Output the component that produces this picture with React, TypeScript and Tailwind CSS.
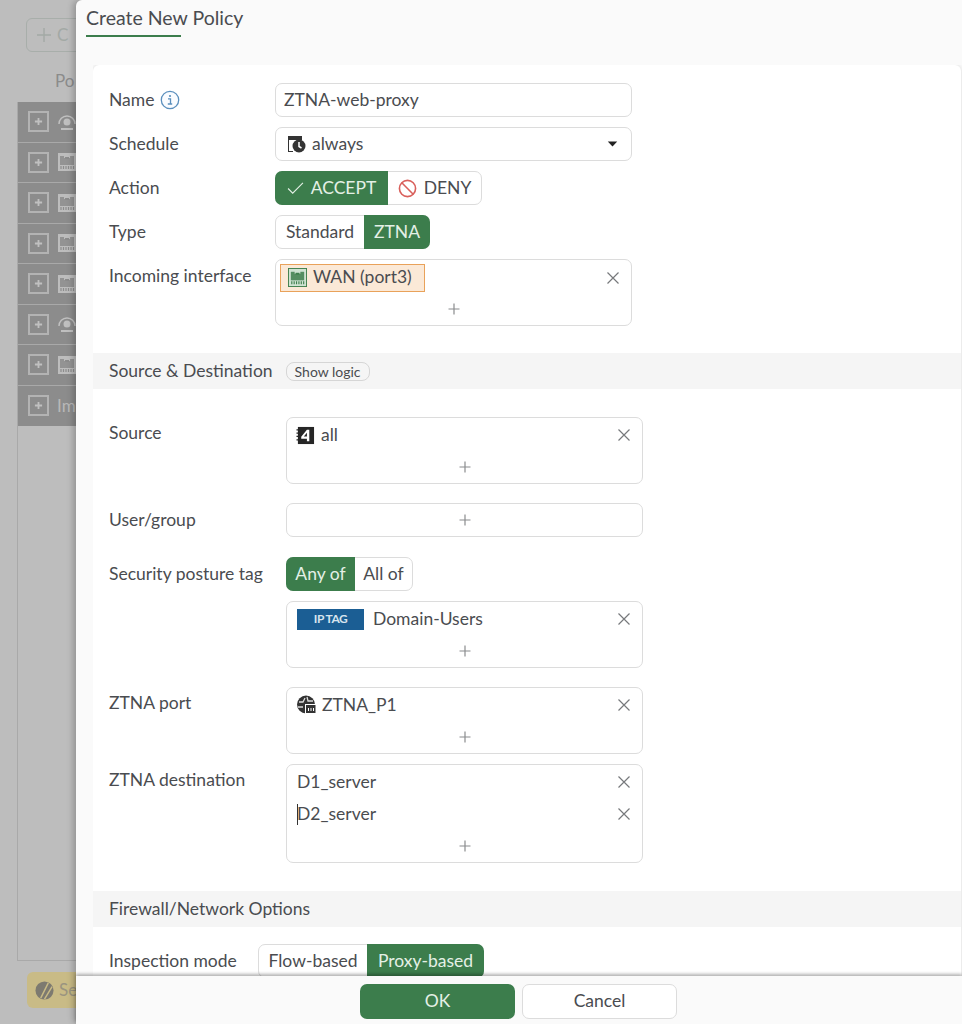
import type { ReactNode } from "react"

function PortIcon({ className, fg = "#3f7f4d", bg = "#cfe3d2" }: { className?: string; fg?: string; bg?: string }) {
  return (
    <svg viewBox="0 0 20 20" className={className}>
      <rect x="0.5" y="0.5" width="19" height="19" fill={bg} stroke={fg} />
      <path d="M3 4h14v9H3z" fill={fg} opacity="0.85" />
      <path d="M7 3h6v3H7z" fill={bg} />
      <path d="M8 5h4v2H8z" fill={fg} />
      <path d="M4 14v3M6.500 14v3M9 14v3M11.500 14v3M14 14v3M16.500 14v3" stroke={fg} strokeWidth="1.200" />
    </svg>
  )
}

function Times() {
  return (
    <svg viewBox="0 0 14 14" className="w-[14px] h-[14px] shrink-0">
      <path d="M1.500 1.500l11 11M12.500 1.500l-11 11" stroke="#77797c" strokeWidth="1.200" fill="none" />
    </svg>
  )
}

function Plus() {
  return (
    <svg viewBox="0 0 12 12" className="w-3 h-3">
      <path d="M6 0.500v11M0.500 6h11" stroke="#8a8c8e" strokeWidth="1.200" fill="none" />
    </svg>
  )
}

function Label({ children }: { children: ReactNode }) {
  return <div className="text-[17.5px] leading-[24px] text-[#4a4c50] whitespace-nowrap">{children}</div>
}

function Row({ label, top = "pt-[5px]", indent, children }: { label: ReactNode; top?: string; indent: string; children: ReactNode }) {
  return (
    <div className="flex">
      <div className={`${indent} shrink-0 ${top}`}>
        <Label>{label}</Label>
      </div>
      {children}
    </div>
  )
}

function Chip({ children, height = "h-[34px]" }: { children: ReactNode; height?: string }) {
  return (
    <div className={`flex items-center ${height} px-[10px] text-[17.5px] text-[#4a4c50] whitespace-nowrap`}>{children}</div>
  )
}

function Toggle({ options }: { options: { text: ReactNode; on?: boolean; cls: string }[] }) {
  return (
    <div className="flex h-[34px] w-fit rounded-[7px] border border-[#dcdcdc] bg-white text-[17.5px] text-[#4a4c50]">
      {options.map((o, i) => (
        <div
          key={i}
          className={`flex items-center justify-center -my-px whitespace-nowrap ${o.cls} ${
            o.on ? "bg-[#3c7d4c] text-[#e4f0e6]" : ""
          } ${o.on && i === 0 ? "rounded-l-[7px] -ml-px" : ""} ${o.on && i > 0 ? "rounded-r-[7px] -mr-px" : ""}`}
        >
          {o.text}
        </div>
      ))}
    </div>
  )
}

function ListBox({ items, width = "w-[357px]" }: { items: ReactNode[]; width?: string }) {
  return (
    <div className={`${width} rounded-[7px] border border-[#dcdcdc] bg-white`}>
      {items.map((item, i) => (
        <div key={i} className={`flex items-center justify-between pr-[11px] h-[32px] ${i === 0 ? "mt-px" : ""}`}>
          {item}
          <Times />
        </div>
      ))}
      <div className="flex justify-center items-center h-[32px]">
        <Plus />
      </div>
    </div>
  )
}

function SectionBar({ children }: { children: ReactNode }) {
  return (
    <div className="flex items-center h-[36px] pl-[16px] bg-[#f5f5f5] text-[17.5px] text-[#4a4c50]">{children}</div>
  )
}

function BackdropRow({ kind, last }: { kind: "user" | "port" | "text"; last?: boolean }) {
  return (
    <div className={`flex items-center h-[40.500px] pl-[10px] gap-[8px] bg-[#8c8c8c] ${last ? "" : "border-b border-[#a9a9a9]"}`}>
      <div className="flex items-center justify-center w-[21px] h-[21px] shrink-0 border-2 border-[#b3b3b3]">
        <svg viewBox="0 0 10 10" className="w-[9px] h-[9px]">
          <path d="M5 1v8M1 5h8" stroke="#c0c0c0" strokeWidth="2" />
        </svg>
      </div>
      {kind === "user" && (
        <svg viewBox="0 0 20 20" className="w-[20px] h-[20px] shrink-0">
          <path d="M2 12a8 8 0 0 1 16 0" fill="none" stroke="#c0c0c0" strokeWidth="1.500" />
          <circle cx="10" cy="10" r="3.500" fill="#c0c0c0" />
          <path d="M4 16h12v2H4z" fill="#c0c0c0" />
        </svg>
      )}
      {kind === "port" && <PortIcon className="w-[20px] h-[20px] shrink-0" fg="#8c8c8c" bg="#bdbdbd" />}
      {kind === "text" && <span className="text-[17px] text-[#b8b8b8]">Im</span>}
    </div>
  )
}

export default function App() {
  return (
    <div className="relative flex w-[962px] h-[1024px] overflow-hidden bg-[#bdbdbd] font-['Lato','Open_Sans',sans-serif]">
      {/* dimmed policy list behind the slide-in */}
      <div className="flex flex-col w-[76px] shrink-0 overflow-hidden">
        <div className="flex items-center gap-[6px] w-[80px] h-[34px] ml-[26px] mt-[18px] pl-[10px] shrink-0 rounded-[6px] border border-[#a8aeaa] text-[#a3a9a5] text-[17px]">
          <svg viewBox="0 0 14 14" className="w-[14px] h-[14px] shrink-0">
            <path d="M7 0v14M0 7h14" stroke="#a3a9a5" strokeWidth="1.400" />
          </svg>
          C
        </div>
        <div className="ml-[55px] mt-[17px] h-[33px] text-[17px] leading-[24px] text-[#8b8b8b]">Po</div>
        <div className="flex flex-col w-[60px] ml-[17px] h-[859px] shrink-0 border-l border-b border-[#a9a9a9]">
          <BackdropRow kind="user" />
          <BackdropRow kind="port" />
          <BackdropRow kind="port" />
          <BackdropRow kind="port" />
          <BackdropRow kind="port" />
          <BackdropRow kind="user" />
          <BackdropRow kind="port" />
          <BackdropRow kind="text" last />
        </div>
        <div className="flex items-center gap-[5px] w-[70px] h-[36px] ml-[27px] mt-[11px] pl-[8px] shrink-0 rounded-[6px] bg-[#c9bb86] text-[#9a9480] text-[17px]">
          <svg viewBox="0 0 20 20" className="w-[19px] h-[19px] shrink-0">
            <circle cx="10" cy="10" r="9.500" fill="#7d7a70" />
            <path d="M6 18L14 2M10 19l8-13" stroke="#c9bb86" strokeWidth="1.500" />
          </svg>
          Se
        </div>
      </div>

      {/* slide-in dialog */}
      <div className="flex flex-col flex-1 min-w-0 rounded-l-[6px] bg-[#fafafa] shadow-[-3px_0_6px_rgba(0,0,0,0.22)]">
        <div className="h-[65px] shrink-0 pl-[10px]">
          <div className="w-fit pt-[4px]">
            <div className="text-[19.500px] leading-[28px] text-[#4a4c50] pr-[3px]">Create New Policy</div>
            <div className="w-[95px] h-[2px] mt-[3px] bg-[#3c7d4c]" />
          </div>
        </div>

        <div className="flex-1 min-h-0 overflow-hidden ml-[17px] pr-px">
          <div className="rounded-t-[6px] bg-white shadow-[0_0_4px_rgba(0,0,0,0.14)] pt-[18px]">
            <div className="flex flex-col gap-[10px] pl-[16px]">
              <Row label={<span className="flex items-center gap-[6px]">Name
                <svg viewBox="0 0 20 20" className="w-[20px] h-[20px]">
                  <circle cx="10" cy="10" r="8.700" fill="#fafcff" stroke="#5b8fbd" strokeWidth="1.300" />
                  <circle cx="10" cy="6" r="1.100" fill="#5b8fbd" />
                  <path d="M8 8.800h2.500v5M7.800 14h4.400" fill="none" stroke="#5b8fbd" strokeWidth="1.300" />
                </svg></span>} indent="w-[166px]">
                <div className="flex items-center w-[357px] h-[34px] px-[8px] rounded-[7px] border border-[#dcdcdc] text-[17.500px] text-[#4a4c50]">ZTNA-web-proxy</div>
              </Row>
              <Row label="Schedule" indent="w-[166px]">
                <div className="flex items-center justify-between w-[357px] h-[34px] pl-[11px] pr-[13px] rounded-[7px] border border-[#dcdcdc] text-[17.500px] text-[#4a4c50]">
                  <span className="flex items-center gap-[6px]">
                    <svg viewBox="0 0 19 18" className="w-[19px] h-[18px]">
                      <path d="M1 1h14v4H2v11h4v1H1z" fill="#333" />
                      <circle cx="12" cy="11" r="6.500" fill="#333" />
                      <path d="M12 7v4.500l2.500 1.500" stroke="#fff" strokeWidth="1.500" fill="none" />
                    </svg>
                    always
                  </span>
                  <svg viewBox="0 0 12 7" className="w-[11px] h-[6px]">
                    <path d="M0.500 0.500h11L6 6.500z" fill="#222" />
                  </svg>
                </div>
              </Row>
              <Row label="Action" indent="w-[166px]">
                <Toggle
                  options={[
                    {
                      on: true,
                      cls: "w-[113px] gap-[7px]",
                      text: (
                        <>
                          <svg viewBox="0 0 18 14" className="w-[17px] h-[13px]">
                            <path d="M1 7l5 5L17 1" fill="none" stroke="#e4f0e6" strokeWidth="1.200" />
                          </svg>
                          ACCEPT
                        </>
                      ),
                    },
                    {
                      cls: "w-[93px] gap-[7px]",
                      text: (
                        <>
                          <svg viewBox="0 0 20 20" className="w-[19px] h-[19px]">
                            <circle cx="10" cy="10" r="8.500" fill="none" stroke="#d9605c" strokeWidth="1.700" />
                            <path d="M4 4l12 12" stroke="#d9605c" strokeWidth="1.700" />
                          </svg>
                          DENY
                        </>
                      ),
                    },
                  ]}
                />
              </Row>
              <Row label="Type" indent="w-[166px]">
                <Toggle
                  options={[
                    { cls: "w-[88px]", text: "Standard" },
                    { on: true, cls: "w-[66px]", text: "ZTNA" },
                  ]}
                />
              </Row>
              <Row label="Incoming interface" indent="w-[166px]">
                <div className="w-[357px] rounded-[7px] border border-[#dcdcdc]">
                  <div className="flex items-center justify-between pr-[11px] pl-[4px] pt-[2px] h-[33px]">
                    <div className="flex items-center gap-[6px] h-[28px] w-[145px] pl-[7px] border border-[#e9a25a] bg-[#fbe9d7] text-[17.500px] text-[#4a4c50]">
                      <PortIcon className="w-[19px] h-[19px]" />
                      WAN (port3)
                    </div>
                    <Times />
                  </div>
                  <div className="flex justify-center items-center h-[32px]">
                    <Plus />
                  </div>
                </div>
              </Row>
            </div>

            <div className="mt-[27px]">
              <SectionBar>
                Source &amp; Destination
                <div className="flex items-center h-[19px] ml-[13px] px-[8px] rounded-[8px] border border-[#d6d6d6] text-[14px] text-[#4a4c50]">Show logic</div>
              </SectionBar>
            </div>

            <div className="flex flex-col pl-[16px] pt-[28px]">
              <Row label="Source" indent="w-[177px]" top="pt-[4px]">
                <ListBox
                  items={[
                    <Chip>
                      <svg viewBox="0 0 20 20" className="w-[19px] h-[19px] mr-[6px] -ml-px">
                        <path d="M2 1h17v18H2z" fill="#262626" />
                        <path d="M0.500 4h2M0.500 7.500h2M0.500 11h2M0.500 14.500h2" stroke="#262626" strokeWidth="1.300" />
                        <path d="M11.500 4h2.500v12h-2.500v-2.700H5.500v-2zM11.500 7.200l-3.300 3.800h3.300z" fill="#fff" fillRule="evenodd" />
                      </svg>
                      all
                    </Chip>,
                  ]}
                />
              </Row>
              <div className="mt-[19px]">
                <Row label="User/group" indent="w-[177px]">
                  <div className="flex items-center justify-center w-[357px] h-[34px] rounded-[7px] border border-[#dcdcdc]">
                    <Plus />
                  </div>
                </Row>
              </div>
              <div className="mt-[20px]">
                <Row label="Security posture tag" indent="w-[177px]">
                  <Toggle
                    options={[
                      { on: true, cls: "w-[69px]", text: "Any of" },
                      { cls: "w-[57px]", text: "All of" },
                    ]}
                  />
                </Row>
              </div>
              <div className="mt-[10px] ml-[177px]">
                <ListBox
                  items={[
                    <Chip>
                      <span className="flex items-center justify-center w-[67px] h-[21px] mr-[9px] bg-[#1b5e94] text-[12px] font-bold tracking-[-0.5px] text-[#d7e4ee]">IP TAG</span>
                      Domain-Users
                    </Chip>,
                  ]}
                />
              </div>
              <div className="mt-[19px]">
                <Row label="ZTNA port" indent="w-[177px]" top="pt-[4px]">
                  <ListBox
                    items={[
                      <Chip>
                        <svg viewBox="0 0 20 20" className="w-[20px] h-[20px] mr-[6px] -ml-px">
                          <circle cx="10" cy="9.500" r="9" fill="#333" />
                          <path d="M3 7h4l2-4M11 2l1 4h5M2 12h5" stroke="#ddd" strokeWidth="1.300" fill="none" />
                          <rect x="9" y="9" width="11" height="10" fill="#fff" />
                          <rect x="10" y="10" width="9.500" height="8" fill="#333" />
                          <path d="M12 13h1v3h-1zM14.500 13h1v3h-1zM17 13h1v3h-1z" fill="#fff" />
                        </svg>
                        ZTNA_P1
                      </Chip>,
                    ]}
                  />
                </Row>
              </div>
              <div className="mt-[10px]">
                <Row label="ZTNA destination" indent="w-[177px]" top="pt-[4px]">
                  <ListBox
                    items={[
                      <Chip>D1_server</Chip>,
                      <div className="relative">
                        <Chip>D2_server</Chip>
                        <span className="absolute left-[10px] top-[7px] w-px h-[21px] bg-[#333]" />
                      </div>,
                    ]}
                  />
                </Row>
              </div>
            </div>

            <div className="mt-[28px]">
              <SectionBar>Firewall/Network Options</SectionBar>
            </div>

            <div className="pl-[16px] pt-[17px]">
              <Row label="Inspection mode" indent="w-[149px]">
                <Toggle
                  options={[
                    { cls: "w-[108px]", text: "Flow-based" },
                    { on: true, cls: "w-[117px]", text: "Proxy-based" },
                  ]}
                />
              </Row>
            </div>
            <div className="h-[40px]" />
          </div>
        </div>

        <div className="relative flex items-center justify-center gap-[7px] h-[48px] shrink-0 pt-[2px] pr-[1px] bg-[#fafafa] shadow-[0_-2px_3px_rgba(0,0,0,0.3)]">
          <div className="flex items-center justify-center w-[155px] h-[35px] rounded-[7px] bg-[#3c7d4c] text-[17.500px] text-[#e4f0e6]">OK</div>
          <div className="flex items-center justify-center w-[155px] h-[35px] rounded-[7px] border border-[#dcdcdc] bg-white text-[17.500px] text-[#4a4c50]">Cancel</div>
        </div>
      </div>
    </div>
  )
}
